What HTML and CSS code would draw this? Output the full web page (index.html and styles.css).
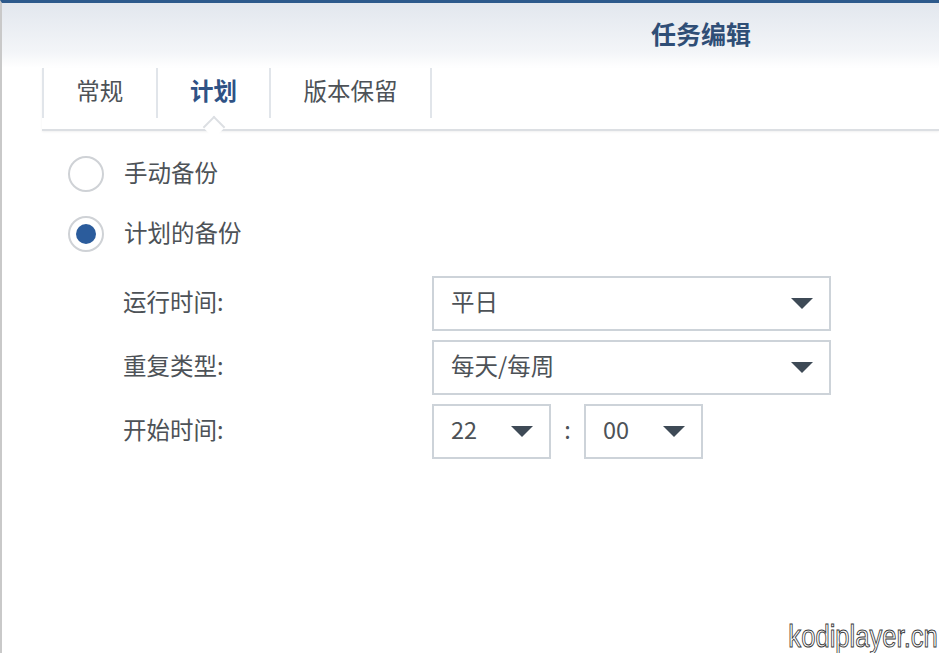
FILE: index.html
```html
<!DOCTYPE html>
<html lang="zh">
<head>
<meta charset="utf-8">
<link rel="stylesheet" href="styles.css">
</head>
<body>
<div class="window">
  <div class="header"><span class="title">任务编辑</span></div>
  <div class="tabbar">
    <div class="tab">常规</div>
    <div class="tab active">计划<span class="caret"></span></div>
    <div class="tab last">版本保留</div>
  </div>
  <div class="content">
    <div class="radios">
      <label class="radio-row"><span class="radio"></span><span class="txt">手动备份</span></label>
      <label class="radio-row"><span class="radio checked"></span><span class="txt">计划的备份</span></label>
    </div>
    <div class="form">
      <div class="label"><span class="txt">运行时间:</span></div>
      <div class="select wide"><span class="txt">平日</span><span class="arrow"></span></div>
      <div class="label"><span class="txt">重复类型:</span></div>
      <div class="select wide"><span class="txt">每天/每周</span><span class="arrow"></span></div>
      <div class="label"><span class="txt">开始时间:</span></div>
      <div class="time">
        <div class="select small"><span class="txt">22</span><span class="arrow"></span></div>
        <span class="colon txt">:</span>
        <div class="select small"><span class="txt">00</span><span class="arrow"></span></div>
      </div>
    </div>
  </div>
  <div class="watermark">kodiplayer.cn</div>
</div>
</body>
</html>
```
FILE: styles.css
```css
html, body {
  margin: 0;
  padding: 0;
  width: 939px;
  height: 653px;
  overflow: hidden;
  background: #ffffff;
  font-family: "Noto Sans CJK SC", "Noto Sans", sans-serif;
}
.window {
  position: relative;
  height: 650px;
  border-top: 3px solid #2d5a8c;
  border-left: 2px solid #c9c9c9;
  background: #ffffff;
}
.header {
  height: 65px;
  display: flex;
  align-items: center;
  padding-left: 649px;
  box-sizing: border-box;
  padding-bottom: 6px;
  background: linear-gradient(to bottom, #e2e7ee 0%, #f3f5f8 75%, #ffffff 100%);
}
.title {
  font-size: 25px;
  font-weight: bold;
  color: #2f4e76;
}
.tabbar {
  margin-left: 40px;
  height: 61px;
  display: flex;
  align-items: flex-start;
  border-bottom: 2px solid #dcdfe3;
  box-shadow: 0 1px 2px rgba(0,0,0,0.06);
}
.tab {
  position: relative;
  height: 50px;
  line-height: 44px;
  padding: 0 32.3px 6px;
  box-sizing: border-box;
  border-left: 2px solid #e1e5ea;
  font-size: 23.5px;
  color: #4d5257;
}
.tab.last {
  border-right: 2px solid #e1e5ea;
}
.tab.active {
  color: #2f5285;
  font-weight: bold;
}
.caret {
  position: absolute;
  left: 50%;
  bottom: -17px;
  width: 14px;
  height: 14px;
  margin-left: -7px;
  background: #ffffff;
  border-left: 2px solid #dcdfe3;
  border-top: 2px solid #dcdfe3;
  transform: rotate(45deg);
}
.content {
  padding-top: 25px;
}
.txt {
  padding-bottom: 5px;
}
.radios {
  padding-left: 66px;
  display: flex;
  flex-direction: column;
  gap: 24px;
}
.radio-row {
  display: flex;
  align-items: center;
  height: 36px;
  font-size: 23.5px;
  color: #4d5257;
}
.radio {
  width: 32px;
  height: 32px;
  border: 2px solid #cfd2d6;
  border-radius: 50%;
  margin-right: 20px;
  display: flex;
  align-items: center;
  justify-content: center;
}
.radio.checked::after {
  content: "";
  width: 20px;
  height: 20px;
  border-radius: 50%;
  background: #2b5c9c;
}
.form {
  margin-top: 24px;
  padding-left: 121px;
  display: grid;
  grid-template-columns: 309px auto;
  row-gap: 9px;
  align-items: center;
}
.label {
  font-size: 23.5px;
  color: #4d5257;
  height: 55px;
  display: flex;
  align-items: center;
}
.select {
  height: 55px;
  box-sizing: border-box;
  border: 2px solid #cdd3d9;
  display: flex;
  align-items: center;
  justify-content: space-between;
  padding: 0 16px 0 17px;
  font-size: 23.5px;
  color: #4d5257;
  background: #ffffff;
}
.select.wide {
  width: 399px;
}
.select.small {
  width: 119px;
}
.arrow {
  width: 0;
  height: 0;
  border-left: 11px solid transparent;
  border-right: 11px solid transparent;
  border-top: 11px solid #3e4a56;
}
.time {
  display: flex;
  align-items: center;
}
.colon {
  width: 33px;
  text-align: center;
  font-size: 23.5px;
  color: #4d5257;
}
.watermark {
  position: absolute;
  right: 1px;
  bottom: 0px;
  font-family: "Liberation Sans", sans-serif;
  font-size: 32px;
  line-height: 34px;
  color: #ffffff;
  -webkit-text-stroke: 1px #3a3a3a;
  transform: scaleX(0.8);
  transform-origin: right bottom;
}
```
